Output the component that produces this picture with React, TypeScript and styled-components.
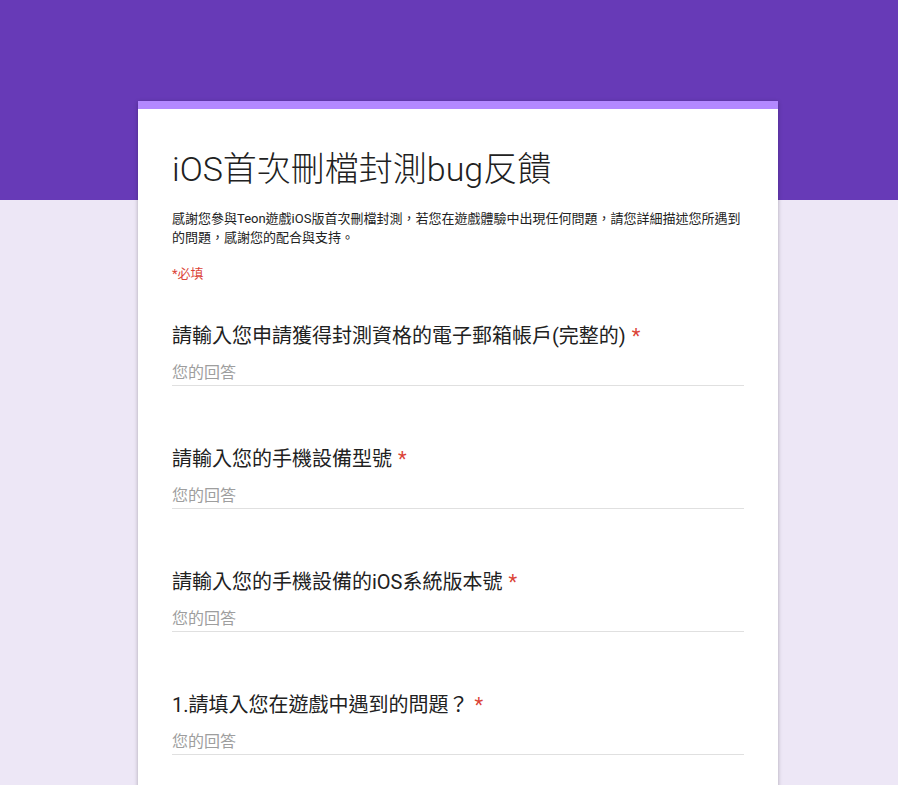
import * as React from "react";
import styled, { createGlobalStyle } from "styled-components";

const questions = [
  "請輸入您申請獲得封測資格的電子郵箱帳戶(完整的)",
  "請輸入您的手機設備型號",
  "請輸入您的手機設備的iOS系統版本號",
  "1.請填入您在遊戲中遇到的問題？",
];

const GlobalStyle = createGlobalStyle`
  html, body {
    margin: 0;
    padding: 0;
  }
  body {
    font-family: Roboto, "Noto Sans CJK TC", "Noto Sans", sans-serif;
    color: #212121;
  }
`;

export default function App() {
  return (
    <Page>
      <GlobalStyle />
      <FormCard>
        <CardHeader>
          <FormTitle>iOS首次刪檔封測bug反饋</FormTitle>
          <Description>
            感謝您參與Teon遊戲iOS版首次刪檔封測，若您在遊戲體驗中出現任何問題，請您詳細描述您所遇到的問題，感謝您的配合與支持。
          </Description>
          <RequiredNote>*必填</RequiredNote>
        </CardHeader>
        <QuestionList>
          {questions.map((q) => (
            <Question key={q}>
              <QuestionTitle>
                {q}
                <Star>*</Star>
              </QuestionTitle>
              <AnswerInput placeholder="您的回答" />
            </Question>
          ))}
        </QuestionList>
      </FormCard>
    </Page>
  );
}

const Page = styled.div`
  min-height: 100vh;
  padding: 101px 0 0 18px;
  background: linear-gradient(to bottom, #673ab7 0, #673ab7 200px, #ede7f6 200px);
  box-sizing: border-box;
`;

const FormCard = styled.div`
  width: 640px;
  margin: 0 auto;
  background: #fff;
  border-top: 8px solid #b388ff;
  box-shadow: 0 1px 4px rgba(0, 0, 0, 0.28);
  padding: 0 34px 60px;
  box-sizing: border-box;
`;

const CardHeader = styled.div`
  padding-top: 40px;
  display: flex;
  flex-direction: column;
`;

const FormTitle = styled.h1`
  margin: 0;
  font-size: 34px;
  line-height: 40px;
  font-weight: 300;
  color: #212121;
`;

const Description = styled.p`
  margin: 20px 0 0;
  font-size: 13px;
  line-height: 19px;
  color: #212121;
`;

const RequiredNote = styled.div`
  margin-top: 17px;
  font-size: 13px;
  line-height: 19px;
  color: #db4437;
`;

const QuestionList = styled.div`
  display: flex;
  flex-direction: column;
  gap: 59px;
  margin-top: 39px;
`;

const Question = styled.div`
  display: flex;
  flex-direction: column;
  gap: 10px;
`;

const QuestionTitle = styled.div`
  font-size: 20px;
  line-height: 28px;
  color: #212121;
`;

const Star = styled.span`
  color: #db4437;
  margin-left: 6px;
`;

const AnswerInput = styled.input`
  border: none;
  border-bottom: 1px solid #e0e0e0;
  padding: 0;
  height: 25px;
  font-family: inherit;
  font-size: 16px;
  line-height: 24px;
  color: #212121;
  outline: none;
  background: transparent;

  &::placeholder {
    color: #9e9e9e;
  }
`;
